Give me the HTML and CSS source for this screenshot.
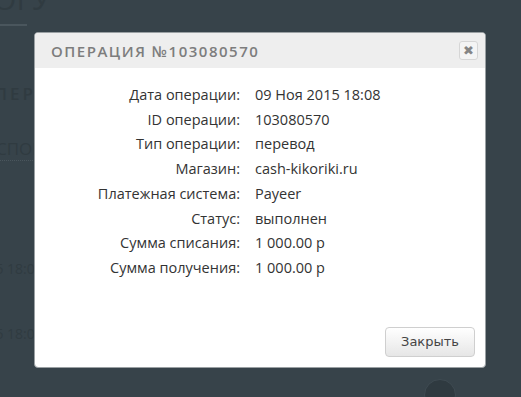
FILE: index.html
```html
<!DOCTYPE html>
<html lang="ru">
<head>
    <meta charset="UTF-8">
    <title>Операция №103080570</title>
    <link rel="stylesheet" href="styles.css">
</head>
<body>
    <div class="page">
        <div class="page-title">Логу</div>
        <div class="page-rule"></div>
        <div class="section-title">Операции</div>
        <div class="section-link">Споры</div>
        <div class="page-date">09.11.2015 18:08</div>
        <div class="page-date">09.11.2015 18:08</div>
        <div class="page-badge"></div>
    </div>

    <div class="modal">
        <div class="modal-header">
            <h3>Операция №103080570</h3>
            <button class="modal-close" type="button">✖</button>
        </div>
        <div class="modal-body">
            <div class="info">
                <span class="label">Дата операции:</span><span>09 Ноя 2015 18:08</span>
                <span class="label">ID операции:</span><span>103080570</span>
                <span class="label">Тип операции:</span><span>перевод</span>
                <span class="label">Магазин:</span><span>cash-kikoriki.ru</span>
                <span class="label">Платежная система:</span><span>Payeer</span>
                <span class="label">Статус:</span><span>выполнен</span>
                <span class="label">Сумма списания:</span><span>1 000.00 р</span>
                <span class="label">Сумма получения:</span><span>1 000.00 р</span>
            </div>
        </div>
        <div class="modal-footer">
            <button class="btn" type="button">Закрыть</button>
        </div>
    </div>
</body>
</html>
```

FILE: styles.css
```css
html, body {
    overflow: hidden;
}
body {
    margin: 0;
    background: #37434a;
    font-family: 'Open Sans', sans-serif;
}
.page {
    height: 397px;
    overflow: hidden;
    color: #303b41;
}
.page-title {
    font-size: 30px;
    line-height: 20px;
    margin: -11px 0 0 -28px;
    text-transform: uppercase;
}
.page-rule {
    width: 27px;
    height: 2px;
    background: #4a565d;
    margin-top: 15px;
}
.section-title {
    margin: 56px 0 0 -22px;
    font-size: 17px;
    letter-spacing: 3px;
    text-transform: uppercase;
    font-weight: 600;
}
.section-link {
    margin: 32px 0 0 -4px;
    font-size: 17px;
    text-transform: uppercase;
    display: inline-block;
    border-bottom: 1px dotted #4a565d;
}
.page-date {
    font-size: 14px;
    margin: 98px 0 0 -68px;
}
.page-date + .page-date {
    margin-top: 46px;
}
.page-badge {
    width: 30px;
    height: 30px;
    border-radius: 50%;
    background: #2f3a40;
    border: 1px solid #3f4b52;
    margin: 36px 0 0 424px;
}

.modal {
    position: absolute;
    left: 34px;
    top: 32px;
    width: 450px;
    background: #fff;
    border: 1px solid #9aa0a3;
    border-radius: 4px;
    overflow: hidden;
}
.modal-header {
    display: flex;
    align-items: center;
    justify-content: space-between;
    height: 35px;
    background: #eeeeee;
    padding: 0 7px 0 16px;
}
.modal-header h3 {
    margin: 0;
    font-size: 15px;
    font-weight: 600;
    letter-spacing: 1.5px;
    color: #7d7d7d;
    text-transform: uppercase;
}
.modal-close {
    width: 19px;
    height: 19px;
    padding: 0;
    border: 1px solid #d6d6d6;
    border-radius: 3px;
    background: #f4f4f4;
    color: #858585;
    font-size: 13px;
    line-height: 17px;
}
.modal-body {
    padding: 15px 0 0;
}
.info {
    display: grid;
    grid-template-columns: 205px 1fr;
    column-gap: 15px;
    font-size: 14.5px;
    line-height: 24.7px;
    color: #333;
}
.info .label {
    text-align: right;
}
.modal-footer {
    display: flex;
    justify-content: flex-end;
    padding: 46px 10px 10px;
}
.btn {
    width: 90px;
    height: 30px;
    border: 1px solid #cfcfcf;
    border-radius: 4px;
    background: linear-gradient(#ffffff, #e6e6e6);
    color: #444;
    font-family: 'DejaVu Sans', sans-serif;
    font-size: 13px;
}
```
